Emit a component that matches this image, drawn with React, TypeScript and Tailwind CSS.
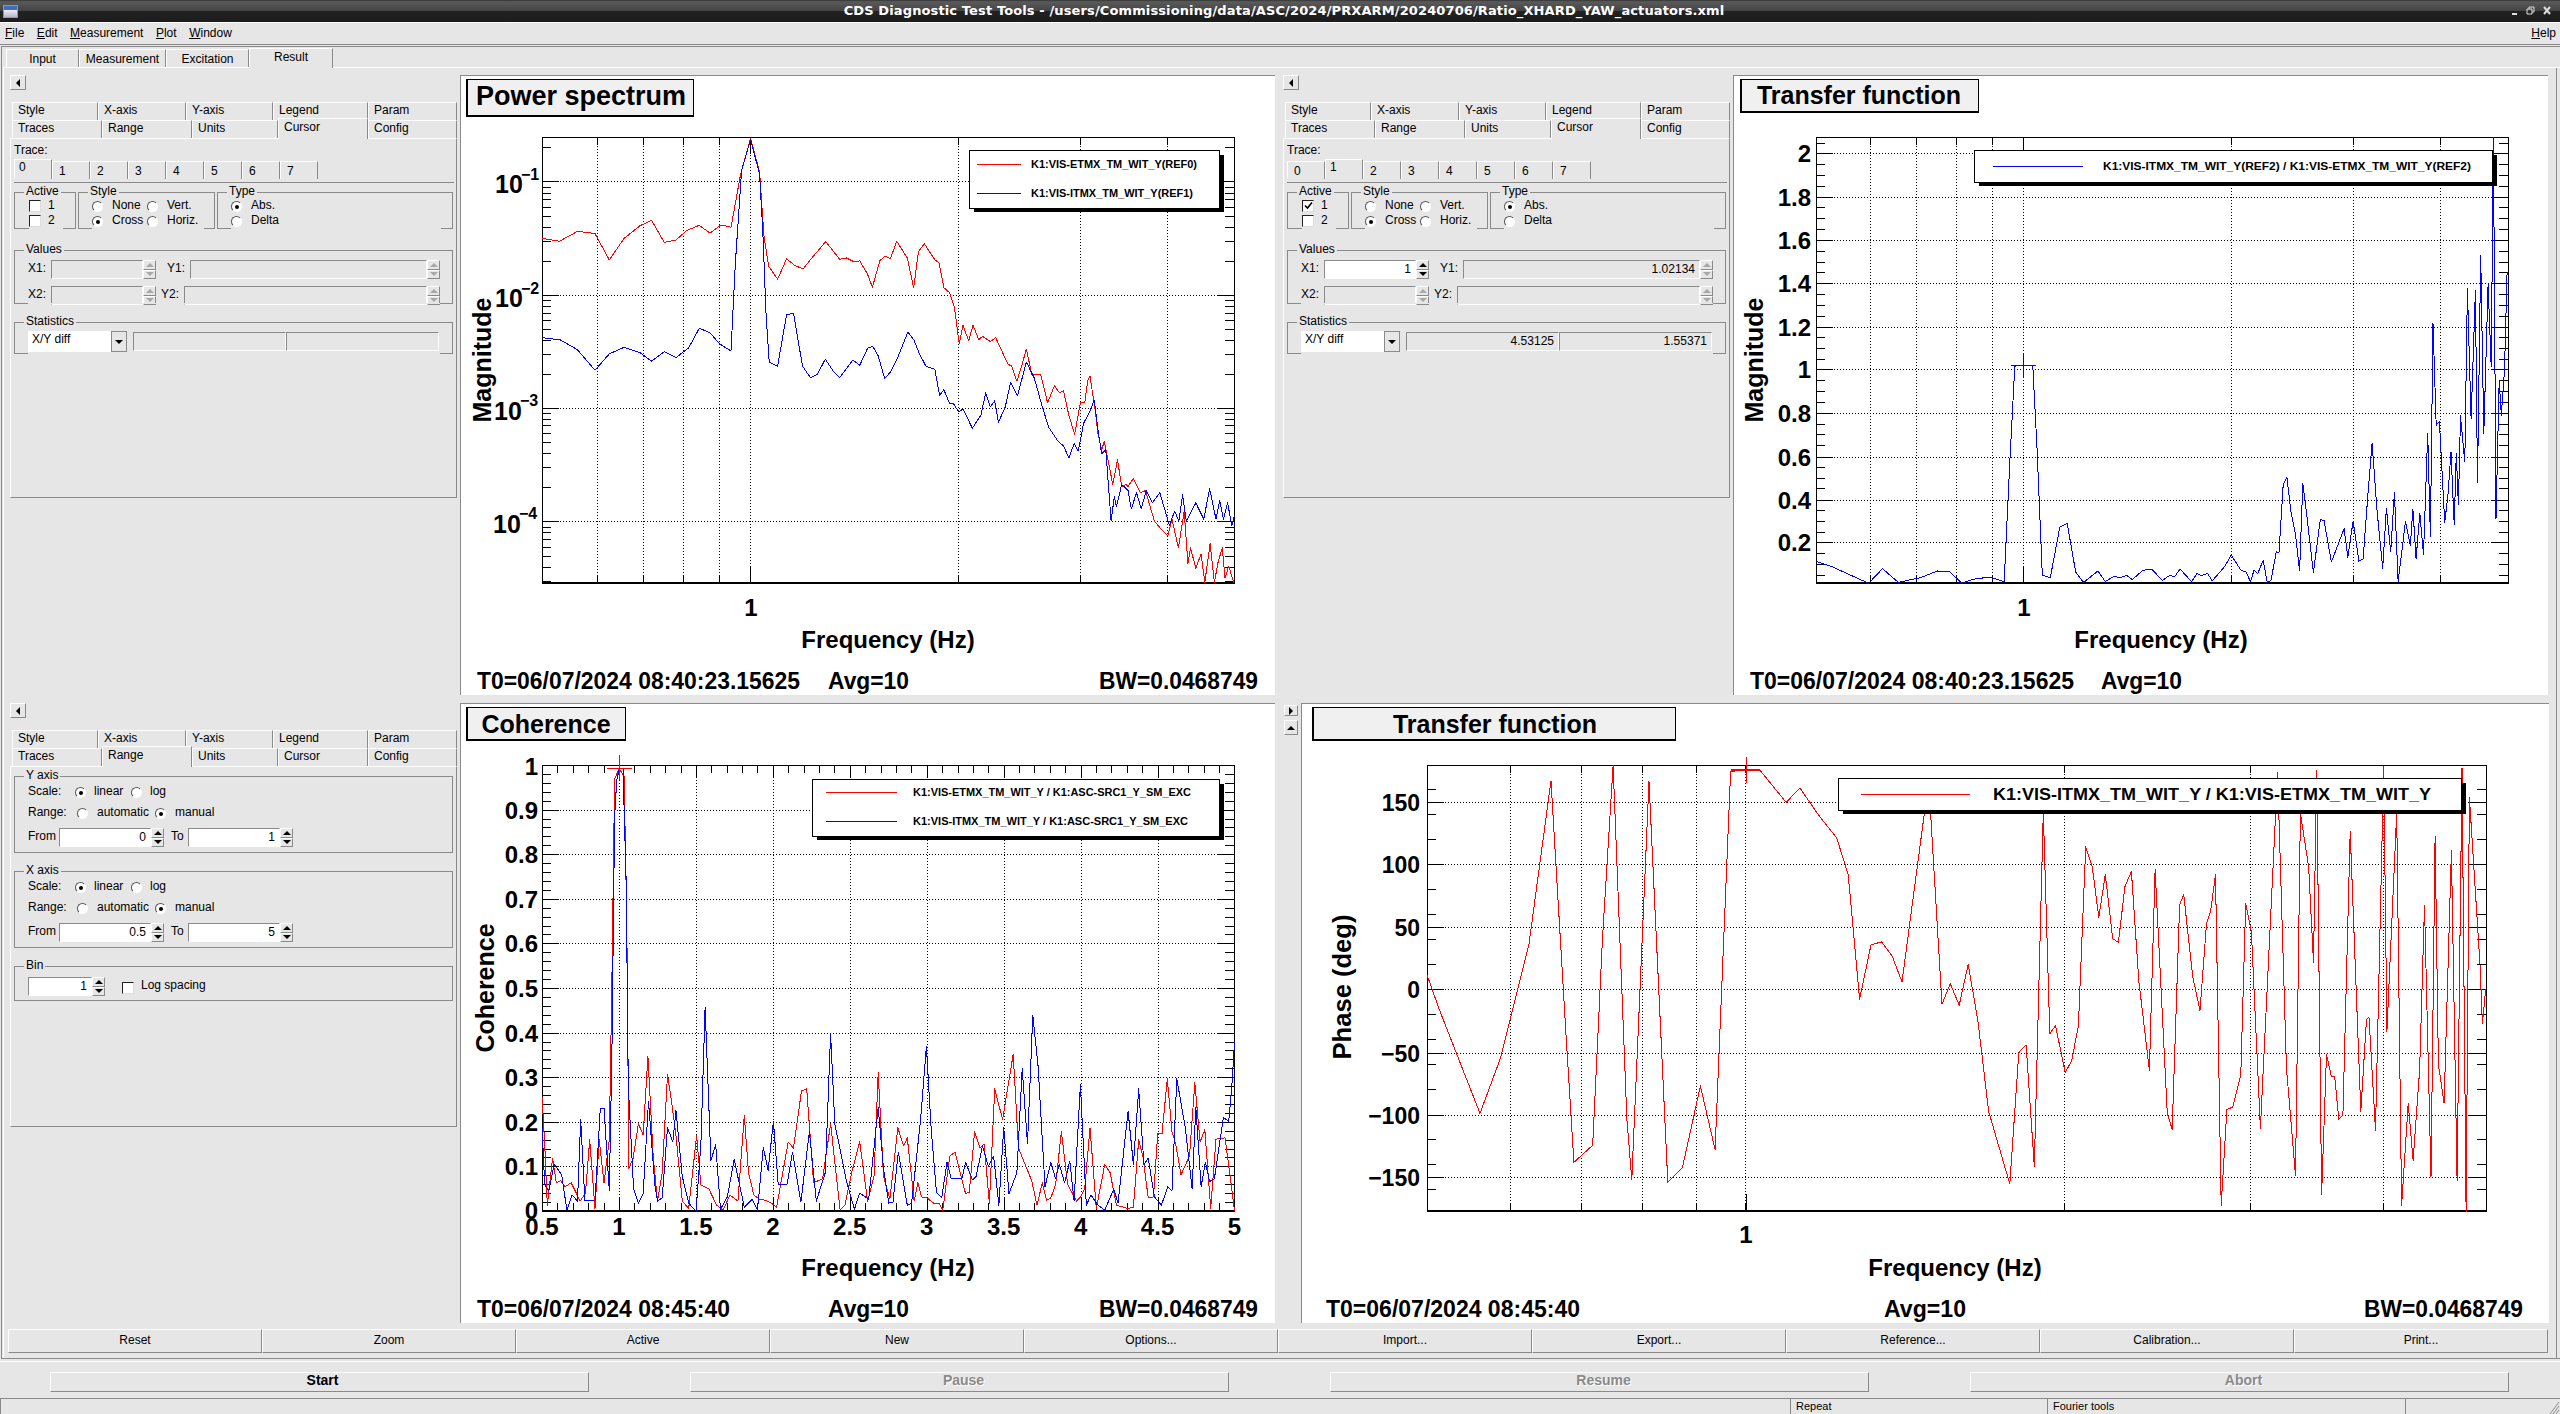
import React from "react";

const GRAY = "#8a8a8a";

function pl(p: number[], ox: number, oy: number, sx: number, sy: number) {
  const o: string[] = [];
  for (let i = 0; i < p.length; i += 2) o.push(`${(ox + p[i] / sx).toFixed(1)},${(oy + p[i + 1] / sy).toFixed(1)}`);
  return o.join(" ");
}

const psRed = [155,437,188,444,222,420,255,425,282,490,310,437,340,406,362,393,386,447,408,441,428,418,452,405,472,424,493,404,512,410,530,280,549,192,566,275,574,430,583,505,600,537,617,487,632,503,648,512,668,480,691,445,717,488,730,485,745,495,755,492,770,525,779,557,793,492,803,480,813,487,825,444,845,485,857,558,866,470,877,450,897,490,905,497,914,558,925,570,934,605,943,695,950,650,961,688,969,650,980,685,987,677,1002,690,1012,680,1035,745,1042,750,1052,787,1062,745,1070,708,1080,770,1097,770,1110,840,1123,798,1132,815,1140,810,1150,870,1161,917,1172,840,1180,840,1186,785,1190,775,1200,860,1205,915,1212,955,1217,935,1225,985,1233,1040,1242,980,1250,1045,1258,1040,1262,1045,1272,1025,1285,1060,1295,1055,1305,1100,1312,1130,1325,1150,1337,1165,1345,1125,1357,1195,1368,1105,1375,1235,1380,1195,1390,1245,1400,1210,1407,1280,1417,1185,1425,1280,1432,1230,1440,1195,1445,1270,1452,1240,1462,1282];
const psBlue = [155,680,190,686,222,710,255,760,282,720,310,704,340,717,362,738,386,715,408,729,432,705,452,657,472,668,490,695,512,713,520,500,532,270,549,195,566,280,572,420,578,620,584,740,600,750,617,624,630,620,647,750,662,778,675,770,690,733,705,762,717,778,742,735,755,748,770,706,780,702,790,725,802,780,813,765,825,735,846,667,857,685,868,720,880,750,897,758,906,822,914,808,925,842,932,842,942,862,950,855,968,902,984,870,993,815,1002,850,1010,835,1017,888,1030,850,1040,790,1053,823,1070,740,1085,780,1100,850,1112,900,1130,935,1140,945,1150,975,1160,940,1168,958,1178,890,1190,860,1198,833,1205,905,1212,965,1220,955,1230,1130,1236,1070,1240,1095,1250,1040,1262,1055,1268,1100,1278,1060,1287,1100,1296,1055,1308,1085,1322,1060,1340,1140,1350,1105,1358,1130,1365,1065,1372,1130,1390,1085,1405,1125,1416,1050,1428,1125,1435,1080,1442,1125,1450,1085,1458,1140,1463,1115];
const tfBlue = [162,1228,190,1240,262,1282,288,1246,318,1280,360,1268,392,1252,415,1254,438,1282,460,1272,490,1267,518,1278,528,1000,538,750,555,748,572,750,580,950,590,1262,605,1268,623,1145,637,1135,653,1255,668,1280,695,1252,709,1278,725,1265,737,1268,750,1263,760,1273,780,1250,797,1248,817,1275,830,1263,840,1266,850,1247,872,1278,882,1258,890,1263,902,1258,911,1276,935,1240,947,1213,965,1250,975,1255,983,1278,990,1250,997,1258,1007,1226,1015,1280,1022,1275,1032,1205,1037,1207,1045,1040,1052,1022,1060,1110,1068,1160,1076,1252,1082,1038,1090,1120,1102,1256,1115,1126,1122,1128,1136,1230,1160,1148,1167,1218,1177,1130,1188,1228,1196,1222,1205,1065,1213,938,1222,1100,1233,1245,1240,1098,1248,1205,1255,1060,1262,1278,1276,1130,1285,1190,1290,1100,1296,1222,1303,1110,1310,1212,1318,915,1323,1168,1328,645,1334,895,1340,885,1350,1133,1356,1070,1362,960,1368,1138,1372,965,1376,1090,1380,872,1388,985,1393,560,1400,880,1408,565,1412,1035,1418,478,1424,915,1432,550,1438,752,1442,190,1447,1125,1453,785,1457,870,1463,760,1468,520];
const coRed = [155,985,160,1100,165,1250,175,1135,182,1195,190,1190,198,1205,210,1195,227,1240,237,1220,245,1090,255,1258,263,1090,272,1195,282,1090,287,700,292,205,301,180,310,200,315,560,319,1160,327,1135,337,1050,346,1078,355,885,365,1130,373,1240,382,1170,392,930,400,1000,408,1080,420,1240,432,1258,447,1080,455,1200,470,1210,485,1250,497,1262,510,1225,525,1240,537,1030,545,1170,555,1225,565,1235,577,1238,588,1245,598,1255,620,1095,630,1110,645,970,655,965,668,1195,685,1185,700,1050,718,1262,727,1250,740,1170,755,1095,770,1240,782,1180,790,925,800,1180,812,1235,827,1060,838,1105,845,1085,858,1240,865,1195,872,1230,882,1232,895,1245,905,1245,912,1262,925,1130,935,1120,955,1222,962,1218,972,1070,982,1110,990,1100,1000,1245,1010,965,1025,1040,1045,880,1055,1110,1080,1190,1090,1250,1100,1195,1108,1238,1116,1232,1125,1200,1136,1070,1148,1200,1165,1240,1172,1230,1180,1210,1190,1060,1202,1258,1218,1150,1228,1170,1240,1250,1262,1258,1272,1255,1282,1090,1290,1130,1300,1232,1310,1230,1318,1075,1326,1075,1336,940,1345,1070,1352,1100,1362,1175,1378,1130,1388,950,1398,1095,1407,1065,1418,1258,1428,1088,1445,1085,1455,1180,1463,1265];
const coBlue = [155,1060,160,1200,168,1215,178,1150,192,1175,202,1262,212,1225,222,1240,228,1040,236,1240,245,1238,255,1240,265,1012,272,1012,282,1215,287,880,292,300,296,210,301,180,308,180,314,460,318,960,328,1210,337,1245,346,1222,356,995,368,1200,373,1240,382,1232,392,1060,402,1095,408,1018,420,1180,432,1245,446,1265,455,1100,463,765,474,1140,483,1102,492,1260,505,1230,518,1138,537,1255,552,1235,562,1262,573,1108,582,1165,592,1045,601,1198,618,1198,628,1120,644,1242,660,1070,673,1240,690,1170,700,830,708,1050,730,1190,745,1260,755,1220,772,1235,790,1010,800,1160,810,1245,818,1242,828,1120,845,1250,853,1245,870,1040,881,860,890,1060,900,1218,910,1232,920,1145,928,1185,948,1185,955,1145,968,1188,975,1180,987,1105,998,1155,1008,1130,1018,1250,1027,1060,1037,1222,1052,1170,1062,915,1072,1100,1082,785,1092,910,1105,1205,1116,1145,1125,1185,1132,1150,1142,1195,1152,1142,1160,1240,1172,955,1183,1250,1192,1225,1205,1250,1218,1262,1235,1210,1243,1245,1262,1020,1272,1150,1282,965,1292,1150,1300,1135,1312,1230,1325,1250,1337,1205,1345,1215,1354,940,1370,1060,1383,1210,1390,1010,1400,1205,1408,1145,1416,1192,1425,1185,1442,1035,1452,1045,1458,960,1463,850];
const phRed = [180,685,195,770,245,1025,270,890,305,610,332,210,350,820,360,1145,383,1103,395,600,408,172,425,1040,431,1187,452,212,475,1194,493,1158,515,958,533,1114,552,187,587,182,620,263,637,228,660,295,682,350,696,440,710,745,724,612,737,605,750,640,762,703,790,280,797,290,811,758,821,707,832,760,843,660,855,800,868,1020,894,1198,905,876,914,857,924,1155,935,285,943,830,950,810,962,925,970,895,978,810,987,372,995,420,1003,545,1011,440,1020,597,1027,606,1035,470,1043,432,1052,700,1065,920,1072,428,1087,1025,1093,1064,1102,515,1107,488,1118,690,1127,773,1135,560,1140,530,1146,440,1153,1250,1160,1015,1167,1010,1177,930,1183,510,1190,580,1201,1062,1222,190,1233,915,1244,1178,1250,290,1260,420,1266,655,1270,185,1276,1224,1282,880,1288,935,1292,935,1297,1040,1302,1030,1311,335,1324,1020,1331,795,1334,790,1342,1066,1352,175,1356,825,1368,290,1374,1252,1382,1000,1388,1140,1396,920,1402,515,1410,1180,1415,345,1419,905,1426,1000,1435,380,1442,1190,1448,180,1453,1265,1457,250,1470,660,1473,805,1477,720];

function Txt({ x, y, s, a, w, c }: { x: number; y: number; s: number; a?: string; w?: number; c: string }) {
  const extra = w ? { textLength: w, lengthAdjust: "spacingAndGlyphs" as const } : {};
  return (
    <text x={x} y={y} fontSize={s} textAnchor={(a || "start") as "start"} fill="#000" {...extra}>
      {c}
    </text>
  );
}

function Rot({ x, y, s, c, w }: { x: number; y: number; s: number; c: string; w?: number }) {
  const extra = w ? { textLength: w, lengthAdjust: "spacingAndGlyphs" as const } : {};
  return (
    <text x={x} y={y} fontSize={s} textAnchor="middle" transform={`rotate(-90 ${x} ${y})`} {...extra}>
      {c}
    </text>
  );
}

function Frame({ l, t, r, b, xg, xMajor, xMinor, yg, yMinor, yLen = 17, xLen = 17 }: { l: number; t: number; r: number; b: number; xg: number[]; xMajor: number[]; xMinor: number[]; yg: number[]; yMinor: number[]; yLen?: number; xLen?: number }) {
  const d: string[] = [];
  yg.forEach((y) => d.push(`M${l} ${y}h${yLen}M${r} ${y}h${-yLen}`));
  yMinor.forEach((y) => d.push(`M${l} ${y}h9M${r} ${y}h-9`));
  xMajor.forEach((x) => d.push(`M${x} ${b}v${-xLen}M${x} ${t}v${xLen}`));
  xMinor.forEach((x) => d.push(`M${x} ${b}v-8M${x} ${t}v8`));
  const grid: string[] = [];
  yg.forEach((y) => grid.push(`M${l} ${y}H${r}`));
  xg.forEach((x) => grid.push(`M${x} ${t}V${b}`));
  return (
    <g shapeRendering="crispEdges" fill="none" stroke="#000">
      <path d={grid.join("")} strokeDasharray="1 2" />
      <path d={d.join("")} strokeWidth="1" />
      <rect x={l} y={t} width={r - l} height={b - t} strokeWidth="1" />
      <path d={`M${l} ${b}H${r}`} strokeWidth="2" />
    </g>
  );
}

function Curve({ p, o, c }: { p: number[]; o: number[]; c: string }) {
  return <polyline points={pl(p, o[0], o[1], o[2], o[3])} fill="none" stroke={c} strokeWidth="1" strokeLinejoin="round" shapeRendering="crispEdges" />;
}

function TitleBox({ x1, y1, x2, y2, s, tx, ty, c }: { x1: number; y1: number; x2: number; y2: number; s: number; tx: number; ty: number; c: string }) {
  return (
    <g>
      <rect x={x1 - 1} y={y1} width={x2 - x1 + 2} height={y2 - y1 + 2} fill="#000" shapeRendering="crispEdges" />
      <rect x={x1 + 1} y={y1 + 1} width={x2 - x1 - 1} height={y2 - y1 - 1} fill="#f0f0f0" shapeRendering="crispEdges" />
      <Txt x={tx} y={ty} s={s} a="middle" c={c} />
    </g>
  );
}

function LegendBox({ l, t, r, b, children }: { l: number; t: number; r: number; b: number; children: React.ReactNode }) {
  return (
    <g>
      <rect x={l + 5} y={t + 5} width={r - l} height={b - t - 1} fill="#000" shapeRendering="crispEdges" />
      <rect x={l} y={t} width={r - l} height={b - t} fill="#fff" stroke="#000" shapeRendering="crispEdges" />
      {children}
    </g>
  );
}

function HLine({ x1, x2, y, c }: { x1: number; x2: number; y: number; c: string }) {
  return <line x1={x1} x2={x2} y1={y} y2={y} stroke={c} shapeRendering="crispEdges" />;
}

function Pane({ x, y, w, h, children }: { x: number; y: number; w: number; h: number; children: React.ReactNode }) {
  return (
    <svg className="block font-bold" width={w} height={h} viewBox={`${x} ${y} ${w} ${h}`}>
      {children}
    </svg>
  );
}

function PowerPlot() {
  const o = [460, 60, 1.889, 2.45];
  const X = [597.6, 643.7, 683.4, 719.4, 750.6, 958.7, 1080.4, 1167.8];
  const Y = [181, 295.5, 408.6, 521.5];
  const minor: number[] = [];
  Y.concat([635]).forEach((yd) => {
    for (let k = 2; k <= 9; k++) {
      const v = yd - Math.log10(k) * 113.6;
      if (v > 138 && v < 583) minor.push(Math.round(v));
    }
  });
  return (
    <Pane x={461} y={76} w={814} h={619}>
      <TitleBox x1={467} y1={79} x2={693} y2={115} s={27} tx={581} ty={105} c="Power spectrum" />
      <Frame l={542} t={137} r={1234} b={583} xg={X} xMajor={[750.6]} xMinor={X} yg={Y} yMinor={minor} />
      <Curve p={psRed} o={o} c="#ff0000" />
      <Curve p={psBlue} o={o} c="#0000ff" />
      <LegendBox l={969} t={150} r={1219} b={208}>
        <HLine x1={977} x2={1021} y={164} c="#ff0000" />
        <Txt x={1031} y={168} s={11} w={166} c="K1:VIS-ETMX_TM_WIT_Y(REF0)" />
        <HLine x1={977} x2={1021} y={193} c="#0000ff" />
        <Txt x={1031} y={197} s={11} w={162} c="K1:VIS-ITMX_TM_WIT_Y(REF1)" />
      </LegendBox>
      <Txt x={495} y={193} s={25} c="10" />
      <Txt x={521} y={180} s={16} c="−1" />
      <Txt x={495} y={307} s={25} c="10" />
      <Txt x={521} y={294} s={16} c="−2" />
      <Txt x={494} y={420} s={25} c="10" />
      <Txt x={520} y={406} s={16} c="−3" />
      <Txt x={493} y={533} s={25} c="10" />
      <Txt x={519} y={519} s={16} c="−4" />
      <Rot x={491} y={360} s={25} c="Magnitude" />
      <Txt x={751} y={616} s={24} a="middle" c="1" />
      <Txt x={888} y={648} s={24} a="middle" c="Frequency (Hz)" />
      <Txt x={477} y={689} s={23} w={323} c="T0=06/07/2024 08:40:23.15625" />
      <Txt x={828} y={689} s={23} w={81} c="Avg=10" />
      <Txt x={1099} y={689} s={23} w={159} c="BW=0.0468749" />
    </Pane>
  );
}

function TfTopPlot() {
  const o = [1730, 60, 1.889, 2.45];
  const X = [1870.3, 1916.3, 1956.6, 1992.6, 2023.8, 2231.3, 2353.6, 2440.4];
  const Yc = [229, 336, 442, 547, 653, 758, 866, 972, 1077, 1182];
  const Y = Yc.map((v) => Math.round(60 + v / 2.45));
  const minor: number[] = [];
  for (let i = -1; i < 10; i++) {
    const v = 60 + (229 + 105.9 * i + 52.9) / 2.45;
    minor.push(Math.round(v));
    minor.push(Math.round(v - 10.8));
    minor.push(Math.round(v + 10.8));
  }
  const labels = ["2", "1.8", "1.6", "1.4", "1.2", "1", "0.8", "0.6", "0.4", "0.2"];
  return (
    <Pane x={1734} y={76} w={814} h={619}>
      <TitleBox x1={1741} y1={79} x2={1978} y2={111} s={25} tx={1859} ty={104} c="Transfer function" />
      <Frame l={1816} t={137} r={2508} b={583} xg={X} xMajor={[2023.8]} xMinor={X} yg={Y} yMinor={minor.filter((v) => v > 138 && v < 583)} />
      <Curve p={tfBlue} o={o} c="#0000ff" />
      <line x1={2011} x2={2036} y1={365} y2={365} stroke="#0000ff" shapeRendering="crispEdges" />
      <line x1={2023.8} x2={2023.8} y1={353} y2={378} stroke="#0000ff" shapeRendering="crispEdges" />
      <LegendBox l={1974} t={150} r={2492} b={182}>
        <HLine x1={1993} x2={2083} y={166} c="#0000ff" />
        <Txt x={2103} y={170} s={11} w={368} c="K1:VIS-ITMX_TM_WIT_Y(REF2) / K1:VIS-ETMX_TM_WIT_Y(REF2)" />
      </LegendBox>
      {labels.map((l, i) => (
        <Txt key={l} x={1811} y={Y[i] + 9} s={24} a="end" c={l} />
      ))}
      <Rot x={1763} y={360} s={25} c="Magnitude" />
      <Txt x={2024} y={616} s={24} a="middle" c="1" />
      <Txt x={2161} y={648} s={24} a="middle" c="Frequency (Hz)" />
      <Txt x={1750} y={689} s={23} w={324} c="T0=06/07/2024 08:40:23.15625" />
      <Txt x={2101} y={689} s={23} w={81} c="Avg=10" />
    </Pane>
  );
}

function CoherencePlot() {
  const o = [460, 695, 1.889, 2.45];
  const l = 542;
  const r = 1234.5;
  const stepX = (r - l) / 9;
  const X = Array.from({ length: 8 }, (_, i) => Math.round(l + stepX * (i + 1)));
  const minorX: number[] = [];
  for (let i = 1; i < 45; i++) if (i % 5 !== 0) minorX.push(Math.round(l + (stepX * i) / 5));
  const Y = [1, 2, 3, 4, 5, 6, 7, 8, 9].map((i) => Math.round(765 + 44.6 * i));
  const minorY: number[] = [];
  for (let i = 1; i < 50; i++) if (i % 5 !== 0) minorY.push(Math.round(765 + 8.92 * i));
  const ylab = ["0.9", "0.8", "0.7", "0.6", "0.5", "0.4", "0.3", "0.2", "0.1"];
  const xlab = ["0.5", "1", "1.5", "2", "2.5", "3", "3.5", "4", "4.5", "5"];
  return (
    <Pane x={461} y={704} w={814} h={619}>
      <TitleBox x1={467} y1={707} x2={625} y2={739} s={25} tx={546} ty={733} c="Coherence" />
      <Frame l={542} t={765} r={1234} b={1211} xg={X} xMajor={X} xMinor={minorX} yg={Y} yMinor={minorY} xLen={13} />
      <Curve p={coRed} o={o} c="#ff0000" />
      <Curve p={coBlue} o={o} c="#0000ff" />
      <line x1={607} x2={632} y1={768} y2={768} stroke="#ff0000" shapeRendering="crispEdges" />
      <line x1={619} x2={619} y1={755} y2={780} stroke="#ff0000" shapeRendering="crispEdges" />
      <LegendBox l={812} t={779} r={1219} b={836}>
        <HLine x1={826} x2={897} y={792} c="#ff0000" />
        <Txt x={913} y={796} s={11} w={278} c="K1:VIS-ETMX_TM_WIT_Y / K1:ASC-SRC1_Y_SM_EXC" />
        <HLine x1={826} x2={897} y={821} c="#0000ff" />
        <Txt x={913} y={825} s={11} w={275} c="K1:VIS-ITMX_TM_WIT_Y / K1:ASC-SRC1_Y_SM_EXC" />
      </LegendBox>
      <Txt x={538} y={775} s={24} a="end" c="1" />
      {ylab.map((t, i) => (
        <Txt key={t} x={538} y={Y[i] + 9} s={24} a="end" c={t} />
      ))}
      <Txt x={538} y={1219} s={24} a="end" c="0" />
      {xlab.map((t, i) => (
        <Txt key={t} x={l + stepX * i} y={1235} s={24} a="middle" c={t} />
      ))}
      <Rot x={494} y={988} s={25} c="Coherence" />
      <Txt x={888} y={1276} s={24} a="middle" c="Frequency (Hz)" />
      <Txt x={477} y={1317} s={23} w={253} c="T0=06/07/2024 08:45:40" />
      <Txt x={828} y={1317} s={23} w={81} c="Avg=10" />
      <Txt x={1099} y={1317} s={23} w={159} c="BW=0.0468749" />
    </Pane>
  );
}

function PhasePlot() {
  const o = [1280, 695, 1.225, 2.45];
  const X = [282, 369, 444, 510, 570, 961, 1188, 1351].map((v) => Math.round(1280 + v / 1.225));
  const Yc = [263, 415, 569, 721, 876, 1028, 1180];
  const Y = Yc.map((v) => Math.round(695 + v / 2.45));
  const minorY: number[] = [];
  for (let i = -8; i <= 8; i++) if (i !== 0) {
    const v = 695 + (721 + 61.2 * i) / 2.45;
    if (i % 5 !== 0 && v > 766 && v < 1210) minorY.push(Math.round(v));
  }
  const ylab = ["150", "100", "50", "0", "−50", "−100", "−150"];
  return (
    <Pane x={1302} y={704} w={1247} h={619}>
      <TitleBox x1={1313} y1={707} x2={1675} y2={739} s={25} tx={1495} ty={733} c="Transfer function" />
      <Frame l={1427} t={765} r={2486} b={1211} xg={X} xMajor={[1746]} xMinor={X} yg={Y} yMinor={minorY} />
      <Curve p={phRed} o={o} c="#ff0000" />
      <line x1={1731} x2={1760} y1={770} y2={770} stroke="#ff0000" strokeWidth="2" shapeRendering="crispEdges" />
      <line x1={1746} x2={1746} y1={757} y2={783} stroke="#ff0000" shapeRendering="crispEdges" />
      <LegendBox l={1838} t={778} r={2461} b={810}>
        <HLine x1={1861} x2={1970} y={794} c="#ff0000" />
        <Txt x={1993} y={800} s={17} w={438} c="K1:VIS-ITMX_TM_WIT_Y / K1:VIS-ETMX_TM_WIT_Y" />
      </LegendBox>
      {ylab.map((t, i) => (
        <Txt key={t} x={1420} y={Y[i] + 9} s={23} a="end" c={t} />
      ))}
      <Rot x={1351} y={987} s={25} w={145} c="Phase (deg)" />
      <Txt x={1746} y={1243} s={24} a="middle" c="1" />
      <Txt x={1955} y={1276} s={24} a="middle" c="Frequency (Hz)" />
      <Txt x={1326} y={1317} s={23} w={254} c="T0=06/07/2024 08:45:40" />
      <Txt x={1884} y={1317} s={23} w={82} c="Avg=10" />
      <Txt x={2364} y={1317} s={23} w={159} c="BW=0.0468749" />
    </Pane>
  );
}

function Tri({ d, c = "#000" }: { d: "l" | "r" | "u" | "dn"; c?: string }) {
  const p = d === "l" ? "4,0 4,8 0,4" : d === "r" ? "0,0 0,8 4,4" : d === "u" ? "0,4 8,4 4,0" : "0,0 8,0 4,4";
  const wh = d === "l" || d === "r" ? { w: 4, h: 8 } : { w: 8, h: 4 };
  return (
    <svg width={wh.w} height={wh.h} viewBox={`0 0 ${wh.w} ${wh.h}`} className="block">
      <polygon points={p} fill={c} />
    </svg>
  );
}

function SmallBtn({ d, cls }: { d: "l" | "r" | "u"; cls: string }) {
  return (
    <div className={`${cls} flex items-center justify-center border border-t-white border-l-white border-r-[#8a8a8a] border-b-[#8a8a8a] bg-[#e6e6e6]`}>
      <Tri d={d} />
    </div>
  );
}

function Tabs({ items, cls }: { items: { t: string; w: string; on?: boolean }[]; cls: string }) {
  return (
    <div className={`${cls} flex items-end h-[18px]`}>
      {items.map((it) =>
        it.on ? (
          <div key={it.t} className={`${it.w} h-[21px] -mb-px relative z-10 bg-[#e6e6e6] border-t border-l border-t-white border-l-white border-r border-r-[#8a8a8a] pl-[5px] pt-px leading-[14px]`}>
            {it.t}
          </div>
        ) : (
          <div key={it.t} className={`${it.w} h-[18px] border-t border-l border-t-white border-l-white border-r border-r-[#8a8a8a] pl-[5px] leading-[15px]`}>
            {it.t}
          </div>
        )
      )}
    </div>
  );
}

function SubTabs({ active }: { active: string }) {
  const r1 = [
    { t: "Style", w: "w-[86px]" },
    { t: "X-axis", w: "w-[88px]" },
    { t: "Y-axis", w: "w-[87px]" },
    { t: "Legend", w: "w-[95px]" },
    { t: "Param", w: "w-[89px]" },
  ];
  const r2 = [
    { t: "Traces", w: "w-[90px]" },
    { t: "Range", w: "w-[90px]" },
    { t: "Units", w: "w-[86px]" },
    { t: "Cursor", w: "w-[90px]" },
    { t: "Config", w: "w-[89px]" },
  ].map((x) => ({ ...x, on: x.t === active }));
  return (
    <div className="mt-[12px]">
      <Tabs items={r1} cls="ml-[2px]" />
      <Tabs items={r2} cls="ml-[2px]" />
    </div>
  );
}

function Radio({ on }: { on?: boolean }) {
  return (
    <div className="w-[11px] h-[11px] shrink-0 rounded-full bg-white border border-t-[#555] border-l-[#555] border-r-white border-b-white flex items-center justify-center translate-y-[2px]">
      {on ? <div className="w-[4px] h-[4px] rounded-full bg-black" /> : null}
    </div>
  );
}

function Check({ on }: { on?: boolean }) {
  return (
    <div className="w-[12px] h-[12px] shrink-0 bg-white border border-t-[#222] border-l-[#222] border-r-[#ddd] border-b-[#ddd] flex items-center justify-center translate-y-[1px]">
      {on ? (
        <svg width="9" height="9" viewBox="0 0 9 9" className="block">
          <path d="M1 4.5 L3.5 7 L8 1.5" fill="none" stroke="#000" strokeWidth="1.6" />
        </svg>
      ) : null}
    </div>
  );
}

function Group({ label, cls, gap, children }: { label: string; cls: string; gap?: string; children: React.ReactNode }) {
  return (
    <fieldset className={`${cls} relative border border-[#8a8a8a]`}>
      <legend className="ml-[9px] px-[2px] leading-[13px] pb-px text-[12px]">{label}</legend>
      {children}
      {gap ? <span className={`${gap} absolute -bottom-px h-px bg-[#e6e6e6]`} /> : null}
    </fieldset>
  );
}

function Spin({ on }: { on?: boolean }) {
  const c = on ? "#000" : "#a8a8a8";
  const b = "h-[9.5px] flex items-center justify-center border border-t-white border-l-white border-r-[#8a8a8a] border-b-[#8a8a8a]";
  return (
    <div className="w-[13px] h-[19px] shrink-0 flex flex-col">
      <div className={b}>
        <Tri d="u" c={c} />
      </div>
      <div className={b}>
        <Tri d="dn" c={c} />
      </div>
    </div>
  );
}

function Field({ w, v, on }: { w: string; v?: string; on?: boolean }) {
  return (
    <div className={`${w} h-[19px] shrink-0 border border-t-[#8a8a8a] border-l-[#8a8a8a] border-r-white border-b-white ${on ? "bg-white" : "bg-[#e6e6e6]"} flex items-center justify-end pr-[4px] pb-[2px] leading-[14px]`}>
      {v}
    </div>
  );
}

function Lab({ cls, t }: { cls: string; t: string }) {
  return <span className={`${cls} pb-[3px]`}>{t}</span>;
}

function CursorPanel({ trace, checked, x1, y1, d1, d2 }: { trace: number; checked?: boolean; x1?: string; y1?: string; d1?: string; d2?: string }) {
  return (
    <div className="w-[447px] h-[360px] border border-t-white border-l-white border-r-[#8a8a8a] border-b-[#8a8a8a] px-[3px]">
      <div className="mt-[4px] h-[14px] leading-[14px]">Trace:</div>
      <div className="mt-[4px] h-[18px] flex items-end">
        {[0, 1, 2, 3, 4, 5, 6, 7].map((n) =>
          n === trace ? (
            <div key={n} className="w-[38px] h-[20px] border-t border-l border-white border-r border-r-[#8a8a8a] pl-[4px] leading-[15px]">
              {n}
            </div>
          ) : (
            <div key={n} className="w-[38px] h-[18px] border-t border-l border-white border-r border-r-[#8a8a8a] pl-[6px] leading-[19px]">
              {n}
            </div>
          )
        )}
      </div>
      <div className="mt-[3px] w-[440px] h-px bg-[#8a8a8a]" />
      <div className="mt-[2px] flex gap-[2px]">
        <Group label="Active" cls="w-[62px] h-[44px]" gap="left-[14px] w-[34px]">
          <div className="-mt-[2px] pl-[14px]">
            <div className="flex items-center gap-[7px] h-[15px]"><Check on={checked} />1</div>
            <div className="flex items-center gap-[7px] h-[15px]"><Check />2</div>
          </div>
        </Group>
        <Group label="Style" cls="w-[137px] h-[44px]" gap="left-[13px] w-[112px]">
          <div className="-mt-[2px] pl-[13px]">
            <div className="flex items-center h-[15px]">
              <Radio />
              <span className="ml-[9px] w-[35px]">None</span>
              <Radio />
              <span className="ml-[9px]">Vert.</span>
            </div>
            <div className="flex items-center h-[15px]">
              <Radio on />
              <span className="ml-[9px] w-[35px]">Cross</span>
              <Radio />
              <span className="ml-[9px]">Horiz.</span>
            </div>
          </div>
        </Group>
        <Group label="Type" cls="w-[236px] h-[44px]" gap="left-[13px] w-[210px]">
          <div className="-mt-[2px] pl-[13px]">
            <div className="flex items-center h-[15px]">
              <Radio on />
              <span className="ml-[9px]">Abs.</span>
            </div>
            <div className="flex items-center h-[15px]">
              <Radio />
              <span className="ml-[9px]">Delta</span>
            </div>
          </div>
        </Group>
      </div>
      <Group label="Values" cls="mt-[14px] w-[439px] h-[61px]" gap="left-[13px] w-[412px]">
        <div className="mt-[2px] pl-[13px] flex items-center">
          <Lab cls="w-[23px]" t="X1:" />
          <Field w="w-[92px]" v={x1} on={!!x1} />
          <Spin on={!!x1} />
          <Lab cls="ml-[11px] w-[23px]" t="Y1:" />
          <Field w="w-[237px]" v={y1} />
          <Spin />
        </div>
        <div className="mt-[5px] pl-[13px] flex items-center">
          <Lab cls="w-[23px]" t="X2:" />
          <Field w="w-[92px]" />
          <Spin />
          <Lab cls="ml-[5px] w-[23px]" t="Y2:" />
          <Field w="w-[243px]" />
          <Spin />
        </div>
      </Group>
      <Group label="Statistics" cls="mt-[11px] w-[439px] h-[39px]" gap="left-[13px] w-[412px]">
        <div className="mt-[2px] pl-[13px] flex items-center relative z-10">
          <div className="w-[99px] h-[21px] flex bg-white">
            <div className="flex-1 pl-[4px] leading-[16px]">X/Y diff</div>
            <div className="w-[16px] border border-[#8a8a8a] bg-[#e6e6e6] flex items-center justify-center">
              <Tri d="dn" />
            </div>
          </div>
          <div className="ml-[6px]"><Field w="w-[153px]" v={d1} /></div>
          <Field w="w-[153px]" v={d2} />
        </div>
      </Group>
    </div>
  );
}

function AxisGroup({ label, from, to, cls }: { label: string; from: string; to: string; cls: string }) {
  return (
    <Group label={label} cls={`${cls} w-[439px] h-[84px]`}>
      <div className="pl-[13px] flex items-center h-[15px]">
        <span className="w-[47px]">Scale:</span>
        <Radio on />
        <span className="ml-[8px] w-[37px]">linear</span>
        <Radio />
        <span className="ml-[8px]">log</span>
      </div>
      <div className="mt-[6px] pl-[13px] flex items-center h-[15px]">
        <span className="w-[49px]">Range:</span>
        <Radio />
        <span className="ml-[9px] w-[58px]">automatic</span>
        <Radio on />
        <span className="ml-[9px]">manual</span>
      </div>
      <div className="mt-[8px] pl-[13px] flex items-center">
        <Lab cls="w-[31px]" t="From" />
        <Field w="w-[92px]" v={from} on />
        <Spin on />
        <Lab cls="ml-[7px] w-[17px]" t="To" />
        <Field w="w-[92px]" v={to} on />
        <Spin on />
      </div>
    </Group>
  );
}

function RangePanel() {
  return (
    <div className="w-[447px] h-[361px] border border-t-white border-l-white border-r-[#8a8a8a] border-b-[#8a8a8a] px-[3px]">
      <AxisGroup label="Y axis" from="0" to="1" cls="mt-[2px]" />
      <AxisGroup label="X axis" from="0.5" to="5" cls="mt-[11px]" />
      <Group label="Bin" cls="mt-[11px] w-[439px] h-[42px]">
        <div className="mt-[3px] pl-[13px] flex items-center">
          <Field w="w-[64px]" v="1" on />
          <Spin on />
          <span className="ml-[17px]"><Check /></span>
          <Lab cls="ml-[7px]" t="Log spacing" />
        </div>
      </Group>
    </div>
  );
}

function Raised({ cls, t, extra }: { cls: string; t: string; extra?: string }) {
  return (
    <div className={`${cls} h-full flex items-center justify-center border border-t-white border-l-white border-r-[#8a8a8a] border-b-[#8a8a8a] ${extra || ""}`}>
      {t}
    </div>
  );
}

export default function App() {
  const pane = "h-[620px] shrink-0 bg-white border-t border-l border-t-[#8a8a8a] border-l-[#8a8a8a]";
  const dim = "pl-[8px] pb-[4px] text-[14px] font-bold text-[#8a8a8a] [text-shadow:1px_1px_0_#fff]";
  return (
    <div className="w-[2560px] h-[1414px] overflow-hidden flex flex-col bg-[#e6e6e6] text-black text-[12px] font-['Liberation_Sans',sans-serif]">
      <div className="h-[22px] shrink-0 flex items-center bg-[linear-gradient(#333_0%,#5a5a5a_8%,#444_48%,#222_50%,#1c1c1c_100%)]">
        <div className="ml-[3px] w-[15px] h-[13px] border border-[#999] bg-[linear-gradient(#3f6fb5_35%,#eef_35%,#b8b8c8_100%)]" />
        <div className="flex-1 text-center pl-[44px] text-white font-bold text-[13px] tracking-[0.12px] font-['DejaVu_Sans',sans-serif]">CDS Diagnostic Test Tools - /users/Commissioning/data/ASC/2024/PRXARM/20240706/Ratio_XHARD_YAW_actuators.xml</div>
        <svg width="50" height="22" viewBox="0 0 50 22" className="block mr-[4px]">
          <path d="M6 14h5" stroke="#ddd" strokeWidth="2" />
          <path d="M21 9h5v5h-5zM23 9V7h5v5h-2" stroke="#ddd" fill="none" />
          <path d="M38 7l6 7M44 7l-6 7" stroke="#ddd" strokeWidth="2" />
        </svg>
      </div>
      <div className="h-[23px] shrink-0 flex items-center pl-[5px] pb-[1px] gap-[12.5px] border-t border-t-white border-b border-b-[#8a8a8a]">
        <span><u>F</u>ile</span>
        <span><u>E</u>dit</span>
        <span><u>M</u>easurement</span>
        <span><u>P</u>lot</span>
        <span><u>W</u>indow</span>
        <span className="ml-auto mr-[4px]"><u>H</u>elp</span>
      </div>
      <div className="mt-px ml-px pl-px border-t border-l border-b border-t-[#8a8a8a] border-l-[#8a8a8a] border-b-[#8a8a8a] flex flex-col">
        <div className="mt-[2px] h-[19px] flex items-end pl-[3px] border-b border-b-white">
          <div className="w-[73px] h-[18px] flex items-center justify-center border-t border-l border-t-white border-l-white border-r border-r-[#8a8a8a]">Input</div>
          <div className="w-[87px] h-[18px] flex items-center justify-center border-t border-l border-t-white border-l-white border-r border-r-[#8a8a8a]">Measurement</div>
          <div className="w-[83px] h-[18px] flex items-center justify-center border-t border-l border-t-white border-l-white border-r border-r-[#8a8a8a]">Excitation</div>
          <div className="w-[84px] h-[20px] -mb-px relative z-10 bg-[#e6e6e6] flex justify-center pt-[1px] leading-[14px] border-t border-l border-t-white border-l-white border-r border-r-[#8a8a8a]">Result</div>
        </div>
        <div className="w-[2554px] border-l border-r border-l-white border-r-[#8a8a8a] pb-[5px]">
          <div className="mt-[7px] h-[620px] flex">
            <div className="w-[456px] shrink-0 pl-[6px]">
              <SmallBtn d="l" cls="w-[16px] h-[15px]" />
              <SubTabs active="Cursor" />
              <CursorPanel trace={0} />
            </div>
            <div className={`w-[815px] ${pane}`}>
              <PowerPlot />
            </div>
            <div className="w-[458px] shrink-0 pl-[8px]">
              <SmallBtn d="l" cls="w-[16px] h-[15px]" />
              <SubTabs active="Cursor" />
              <CursorPanel trace={1} checked x1="1" y1="1.02134" d1="4.53125" d2="1.55371" />
            </div>
            <div className={`w-[815px] ${pane}`}>
              <TfTopPlot />
            </div>
          </div>
          <div className="mt-[8px] h-[620px] flex">
            <div className="w-[456px] shrink-0 pl-[6px]">
              <SmallBtn d="l" cls="w-[16px] h-[15px]" />
              <SubTabs active="Range" />
              <RangePanel />
            </div>
            <div className={`w-[815px] ${pane}`}>
              <CoherencePlot />
            </div>
            <div className="w-[26px] shrink-0 pl-[9px] pt-[2px]">
              <SmallBtn d="r" cls="w-[14px] h-[11px]" />
              <SmallBtn d="u" cls="mt-[4px] w-[14px] h-[15px]" />
            </div>
            <div className={`w-[1248px] ${pane}`}>
              <PhasePlot />
            </div>
          </div>
          <div className="mt-[6px] h-[24px] pl-[4px] flex">
            {["Reset", "Zoom", "Active", "New", "Options...", "Import...", "Export...", "Reference...", "Calibration...", "Print..."].map((t) => (
              <Raised key={t} cls="w-[254px]" t={t} extra="pb-[2px]" />
            ))}
          </div>
        </div>
      </div>
      <div className="mt-[2px] h-px shrink-0 bg-white" />
      <div className="mt-[10px] h-[20px] shrink-0 pl-[50px] flex gap-[101px]">
        <Raised cls="w-[539px]" t="Start" extra="pl-[6px] pb-[4px] text-[14px] font-bold" />
        <Raised cls="w-[539px]" t="Pause" extra={dim} />
        <Raised cls="w-[539px]" t="Resume" extra={dim} />
        <Raised cls="w-[539px]" t="Abort" extra={dim} />
      </div>
      <div className="mt-[6px] h-[16px] shrink-0 flex text-[11px] leading-[14px] border-t border-t-[#8a8a8a]">
        <div className="w-[1790px] border-l border-l-[#8a8a8a]" />
        <div className="w-[257px] pl-[5px] border-l border-l-[#8a8a8a]">Repeat</div>
        <div className="w-[358px] pl-[5px] border-l border-l-[#8a8a8a]">Fourier tools</div>
        <div className="flex-1 border-l border-l-[#8a8a8a] flex items-end justify-end">
          <svg width="12" height="14" viewBox="0 0 12 14" className="block">
            <path d="M11 2L2 14M11 6L5 14M11 10L8 14" stroke={GRAY} fill="none" />
          </svg>
        </div>
      </div>
    </div>
  );
}
